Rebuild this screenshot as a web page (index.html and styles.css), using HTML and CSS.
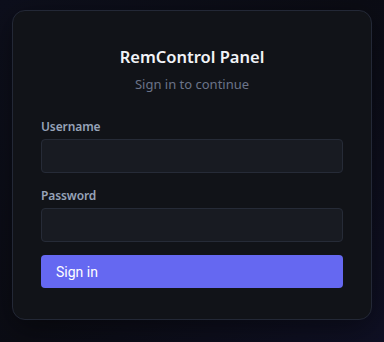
FILE: index.html
```html
<!DOCTYPE html>
<html>
<head>
<meta charset="utf-8">
<link rel="stylesheet" href="styles.css">
</head>
<body>
<main class="card">
  <h1 class="title">RemControl Panel</h1>
  <p class="subtitle">Sign in to continue</p>
  <form class="form">
    <label class="field">
      <span class="label">Username</span>
      <input class="input" type="text">
    </label>
    <label class="field">
      <span class="label">Password</span>
      <input class="input" type="password">
    </label>
    <button class="btn" type="button">Sign in</button>
  </form>
</main>
</body>
</html>
```
FILE: styles.css
```css
html, body {
  margin: 0;
  height: 100%;
}
body {
  background: linear-gradient(135deg, #0d0f1c 0%, #0b0c14 50%, #0f1024 100%);
  font-family: "Noto Sans", "Open Sans", sans-serif;
  padding: 10px 12px;
  box-sizing: border-box;
}
.card {
  width: 360px;
  box-sizing: border-box;
  background: #111318;
  border: 1px solid #232836;
  border-radius: 13px;
  padding: 34px 28px 31px;
  box-shadow: 0 8px 30px rgba(0, 0, 0, 0.4);
}
.title {
  margin: 0;
  text-align: center;
  font-size: 16.5px;
  font-weight: 600;
  line-height: 24px;
  color: #f1f3f7;
}
.subtitle {
  margin: 5px 0 0;
  text-align: center;
  font-size: 13px;
  line-height: 20px;
  color: #6b7489;
}
.form {
  display: flex;
  flex-direction: column;
  margin-top: 24px;
}
.field {
  display: flex;
  flex-direction: column;
  gap: 3px;
  margin-bottom: 14px;
}
.field + .field {
  margin-bottom: 13px;
}
.label {
  font-size: 12px;
  font-weight: 600;
  line-height: 18px;
  color: #97a3b8;
  letter-spacing: -0.1px;
}
.input {
  height: 34px;
  box-sizing: border-box;
  margin: 0;
  background: #181b22;
  border: 1px solid #262b37;
  border-radius: 4px;
  outline: none;
  color: #e5e7eb;
  padding: 0 10px;
}
.btn {
  height: 33px;
  background: #6568f1;
  border: none;
  border-radius: 4px;
  color: #ffffff;
  font-family: Roboto, "Liberation Sans", sans-serif;
  font-size: 14px;
  text-align: left;
  padding: 0 15px;
}
```
